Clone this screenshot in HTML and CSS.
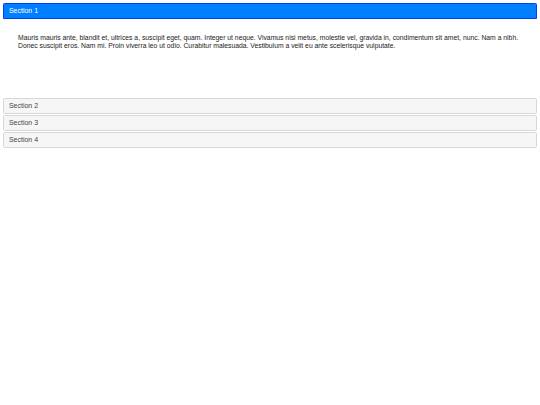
FILE: index.html
```html
<!DOCTYPE html>
<html lang="en">
<head>
    <meta charset="UTF-8">
    <meta name="viewport" content="width=device-width, initial-scale=1.0">
    <title>Accordion</title>
    <link rel="stylesheet" href="styles.css">
</head>
<body>
  <div class="accordion" id="accordion">
    <h3 class="header active" onclick="openSection(0)">Section 1</h3>
    <div class="panel open">
      <p>Mauris mauris ante, blandit et, ultrices a, suscipit eget, quam. Integer ut neque. Vivamus nisi metus, molestie vel, gravida in, condimentum sit amet, nunc. Nam a nibh. Donec suscipit eros. Nam mi. Proin viverra leo ut odio. Curabitur malesuada. Vestibulum a velit eu ante scelerisque vulputate.</p>
    </div>

    <h3 class="header" onclick="openSection(1)">Section 2</h3>
    <div class="panel">
      <p>Sed non urna. Donec et ante. Phasellus eu ligula. Vestibulum sit amet purus. Vivamus hendrerit, dolor at aliquet laoreet, mauris turpis porttitor velit, faucibus interdum tellus libero ac justo.</p>
    </div>

    <h3 class="header" onclick="openSection(2)">Section 3</h3>
    <div class="panel">
      <p>Nam enim risus, molestie et, porta ac, aliquam ac, risus. Quisque lobortis.</p>
      <ul>
        <li>List item one</li>
        <li>List item two</li>
        <li>List item three</li>
      </ul>
    </div>

    <h3 class="header" onclick="openSection(3)">Section 4</h3>
    <div class="panel">
      <p>Cras dictum. Pellentesque habitant morbi tristique senectus et netus et malesuada fames ac turpis egestas.</p>
    </div>
  </div>

<script>
  const headers = document.querySelectorAll('.header');
  const panels = document.querySelectorAll('.panel');

  // 클릭한 섹션만 열기
  function openSection(index) {
    headers.forEach((h, i) => h.classList.toggle('active', i === index));
    panels.forEach((p, i) => p.classList.toggle('open', i === index));
  }
</script>
</body>
</html>
```

FILE: styles.css
```css
body {
  margin: 0;
  padding: 3px;
  background-color: #fff;
  font-family: 'Liberation Sans', Arial, sans-serif;
  font-size: 7px;
}

.accordion {
  width: 100%;
}

.header {
  margin: 1px 0 0;
  padding: 3px 3.5px 3px 4.9px;
  font-size: 7px;
  font-weight: normal;
  line-height: 8px;
  color: #454545;
  background-color: #f6f6f6;
  border: 1px solid #d8d8d8;
  border-radius: 1.5px;
  cursor: pointer;
}

.header:first-child {
  margin-top: 0;
}

.header.active {
  color: #fff;
  background-color: #007fff;
  border-color: #003eff;
  border-bottom-left-radius: 0;
  border-bottom-right-radius: 0;
}

.panel {
  display: none;
  height: 64px;
  padding: 7px 15px;
  color: #1a1a1a;
  overflow: auto;
}

.panel.open {
  display: block;
}

.panel p {
  margin: 8px 0;
  font-size: 6.8px;
  line-height: 8px;
}

.panel ul {
  margin: 0;
  padding-left: 14px;
}
```
